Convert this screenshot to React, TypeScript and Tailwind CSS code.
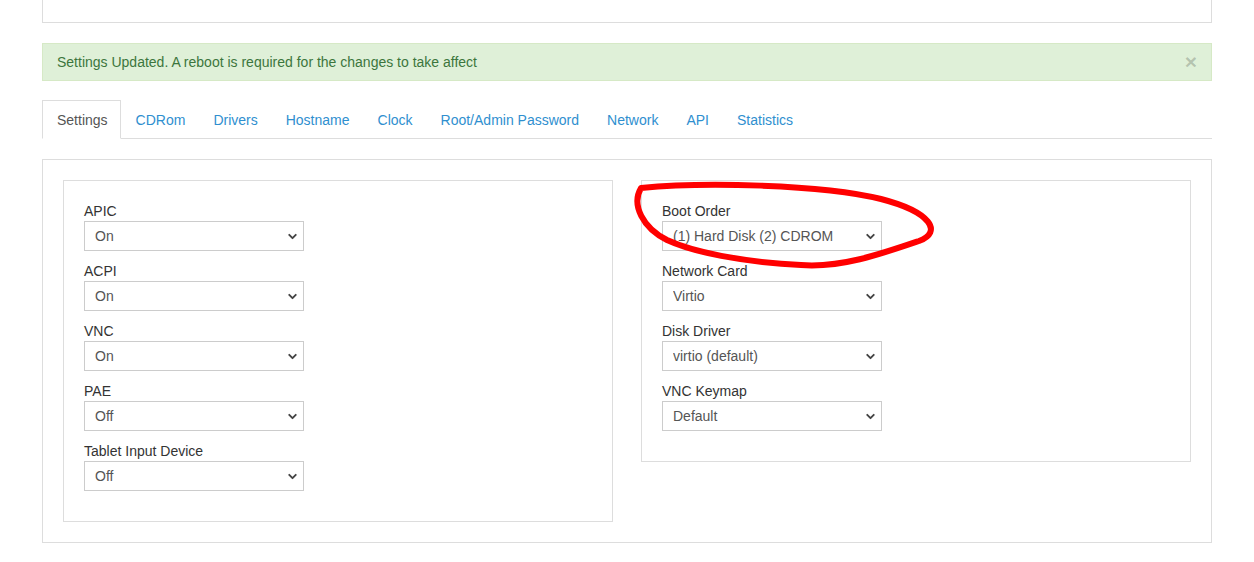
import { ChevronDown } from 'lucide-react';

// 탭 목록
const TABS = [
  'Settings', 'CDRom', 'Drivers', 'Hostname', 'Clock',
  'Root/Admin Password', 'Network', 'API', 'Statistics',
];

const LEFT = [
  { label: 'APIC', value: 'On' },
  { label: 'ACPI', value: 'On' },
  { label: 'VNC', value: 'On' },
  { label: 'PAE', value: 'Off' },
  { label: 'Tablet Input Device', value: 'Off' },
];

const RIGHT = [
  { label: 'Boot Order', value: '(1) Hard Disk (2) CDROM' },
  { label: 'Network Card', value: 'Virtio' },
  { label: 'Disk Driver', value: 'virtio (default)' },
  { label: 'VNC Keymap', value: 'Default' },
];

function Field({ label, value }: { label: string; value: string }) {
  return (
    <div className="mb-[10px]">
      <label className="block h-5 leading-5 text-[14px] text-[#333]">{label}</label>
      <div className="relative w-[220px] h-[30px] border border-[#ccc] bg-white">
        <select
          defaultValue={value}
          className="appearance-none w-full h-full bg-transparent pl-[10px] pr-6
                     text-[14px] text-[#555] outline-none">
          <option>{value}</option>
        </select>
        <ChevronDown
          size={13}
          strokeWidth={3.5}
          className="absolute right-[4px] top-[8px] text-[#444] pointer-events-none"
        />
      </div>
    </div>
  );
}

export default function App() {
  return (
    <div className="min-h-[562px] bg-white font-['Liberation_Sans',Arial,sans-serif] text-[14px]">
      <div className="w-[1170px] mx-auto">

        {/* 위쪽 잘린 패널 */}
        <div className="h-[23px] border border-t-0 border-[#ddd]" />

        {/* 알림 */}
        <div className="mt-5 h-[38px] flex items-center justify-between
                        bg-[#dff0d8] border border-[#d6e9c6] pl-[14px] pr-[14px]">
          <span className="text-[#3c763d]">
            Settings Updated. A reboot is required for the changes to take affect
          </span>
          <span className="text-[21px] leading-none font-bold text-black/20 -mt-[2px]">×</span>
        </div>

        {/* 탭 */}
        <ul className="mt-[19px] flex border-b border-[#ddd]">
          {TABS.map((t, i) => (
            <li key={t} className="-mb-px">
              <a
                className={`block h-[39px] leading-5 py-[9px] pl-[14px] pr-[12px] border
                            ${i === 0
                              ? 'border-[#ddd] border-b-white bg-white text-[#555]'
                              : 'border-transparent text-[#2f8fcf]'}`}>
                {t}
              </a>
            </li>
          ))}
        </ul>

        {/* 설정 패널 */}
        <div className="mt-5 border border-[#ddd] p-5">
          <div className="grid grid-cols-2 gap-[28px] items-start">
            <div className="border border-[#ddd] p-5">
              {LEFT.map(f => <Field key={f.label} {...f} />)}
            </div>
            <div className="relative border border-[#ddd] p-5">
              {RIGHT.map(f => <Field key={f.label} {...f} />)}

              {/* 빨간 표시 */}
              <svg
                className="absolute left-[-8px] top-[-1px] pointer-events-none"
                width="320" height="100" viewBox="633 180 320 100">
                <path
                  d="M 640 188 C 700 182, 820 184, 880 199 C 930 212, 942 232, 918 241
                     C 880 254, 840 268, 800 265 C 740 262, 692 252, 666 240
                     C 642 228, 630 205, 640 188 Z"
                  fill="none" stroke="#ff0000" strokeWidth="6" strokeLinejoin="round" />
              </svg>
            </div>
          </div>
        </div>

      </div>
    </div>
  );
}
